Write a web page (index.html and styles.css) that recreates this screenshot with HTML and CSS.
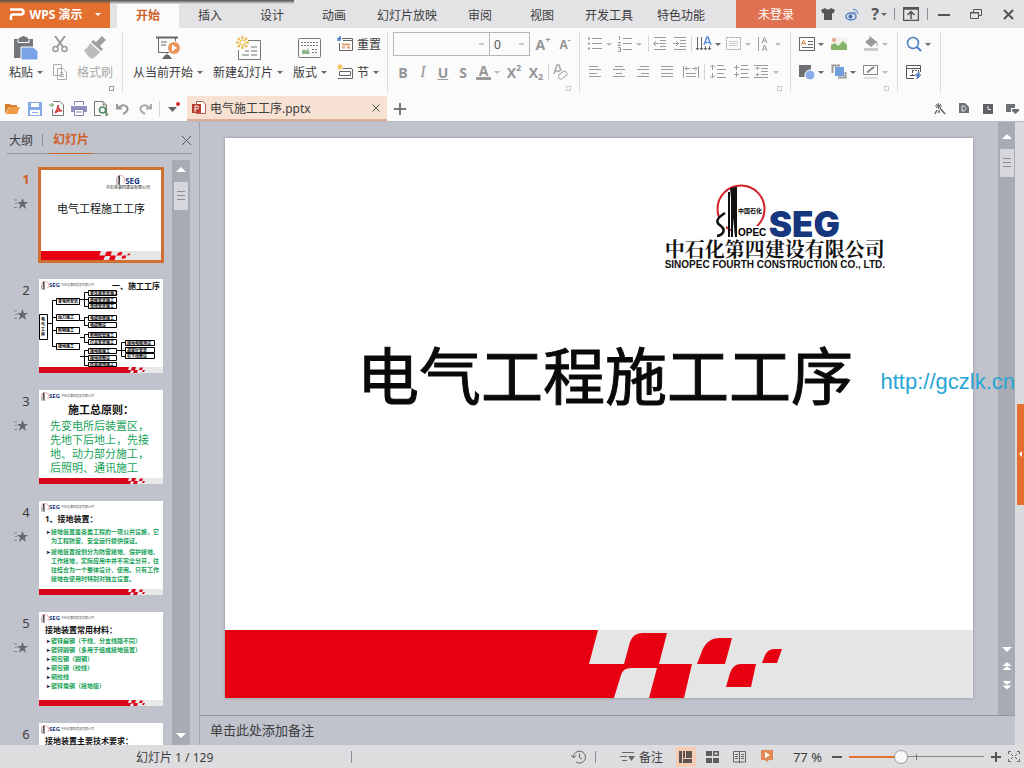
FILE: index.html
```html
<!DOCTYPE html>
<html lang="zh-CN">
<head>
    <meta charset="UTF-8">
    <meta name="viewport" content="width=device-width, initial-scale=1.0">
    <title>电气施工工序.pptx - WPS 演示</title>
    <link rel="stylesheet" href="styles.css">
</head>
<body>
    <svg class="sprite" aria-hidden="true">
        <symbol id="star" viewBox="0 0 14 12"><path d="M8.500 0l1.500 4H14l-3.200 2.500L12 11 8.500 8.300 5 11l1.200-4.500L3 4h4z" fill="#666870"/><path d="M0 2h3M1 5.500h2M0 9.500h3" stroke="#85878f"/></symbol>
        <symbol id="footer-wide" viewBox="0 0 748 68" preserveAspectRatio="none">
            <rect width="748" height="68" fill="#e5e5e5"/>
            <path d="M0 0H373L364 34H399L405 12Q408 3 418 3H442L434 34H467L459 68H424L432 38H406Q398 38 396 45L389 68H0ZM472 34L477 21Q482 8 495 8H507L500 34ZM501 57L505 43Q508 34 516 34H531L526 57ZM537 33L540 25Q543 19 549 19H557L552 33Z" fill="#e60012"/>
        </symbol>
        <symbol id="footer-small" viewBox="0 0 124 6" preserveAspectRatio="none">
            <rect width="124" height="6" fill="#e8e8e8"/>
            <path d="M0 0H90L89 3H92L93 0H97L96 3H99L98 6H94L95 3.500H92L91 6H0ZM100 3L101 .500H104L103 3ZM103 5L104 3H106L105 5Z" fill="#d7061c"/>
        </symbol>
        <symbol id="rig" viewBox="0 0 50 54">
            <circle cx="25" cy="25" r="23.500" fill="none" stroke="#d3222a" stroke-width="2"/>
            <path d="M0 34H10V54H0ZM16 42H50V54H16Z" fill="#fff"/>
            <path d="M13 8V53M16 5V53M20 3V53" stroke="#111" stroke-width="2"/>
            <path d="M14 4L19 53H21L20 3Z" fill="#111"/>
            <path d="M9 29C-1 35 0 39 5 42C10 46 7 51 1 52" fill="none" stroke="#111" stroke-width="2.500"/>
        </symbol>
    </svg>

    <div class="app">
        <header class="titlebar">
            <button class="brand"><svg width="16" height="12" viewBox="0 0 16 12"><path d="M1 1.500H12Q14.500 1.500 14.500 4Q14.500 6.500 12 6.500H4Q2 6.500 2 9V12" fill="none" stroke="#fff" stroke-width="2.500"/></svg><span>WPS 演示</span><i class="caret"></i></button>
            <nav class="tabs">
                <a href="#" class="active">开始</a>
                <a href="#">插入</a>
                <a href="#">设计</a>
                <a href="#">动画</a>
                <a href="#">幻灯片放映</a>
                <a href="#">审阅</a>
                <a href="#">视图</a>
                <a href="#">开发工具</a>
                <a href="#">特色功能</a>
            </nav>
            <button class="login">未登录</button>
            <div class="window-tools">
                <button aria-label="皮肤"><svg width="14" height="12" viewBox="0 0 14 12"><path d="M4 0Q7 3 10 0L14 2L12.500 5.500L11 5V12H3V5L1.500 5.500L0 2Z" fill="#555"/></svg></button>
                <button aria-label="微博"><svg width="14" height="13" viewBox="0 0 14 13" fill="none" stroke="#5480c4"><ellipse cx="6" cy="8.500" rx="5" ry="3.500" stroke-width="1.500"/><circle cx="5.500" cy="8.500" r="1.700" fill="#41659c"/><path d="M8 1.500Q12.500 .500 12.500 6M8.500 4Q10 3.500 10.500 5.500"/></svg></button>
                <button class="help" aria-label="帮助">?<i class="caret"></i></button>
                <i class="bar"></i>
                <button class="wide" aria-label="隐藏功能区"><svg width="16" height="14" viewBox="0 0 16 14" fill="none" stroke="#555"><path d="M.500 .500H15.500V13.500H.500ZM0 2H16M8 12V5M4.500 8L8 4.500L11.500 8" stroke-width="1.500"/></svg></button>
                <i class="bar"></i>
                <button class="wide" aria-label="最小化"><svg width="12" height="12" viewBox="0 0 12 12"><path d="M0 7H12" stroke="#555" stroke-width="2"/></svg></button>
                <button class="wide" aria-label="还原"><svg width="12" height="10" viewBox="0 0 12 10" fill="none" stroke="#555"><path d="M.500 3.500H8.500V9.500H.500ZM3.500 3V.500H11.500V6.500H9M0 4H9"/></svg></button>
                <button class="wide" aria-label="关闭"><svg width="11" height="11" viewBox="0 0 11 11"><path d="M1 1L10 10M10 1L1 10" stroke="#555" stroke-width="2"/></svg></button>
            </div>
        </header>

        <section class="ribbon">
            <!-- clipboard -->
            <div class="group clipboard">
                <button class="big paste">
                    <svg width="26" height="24" viewBox="0 0 26 24"><path d="M1 3H6V1.500H8Q8 0 10.500 0T13 1.500H15V3H20V22H1Z" fill="#747679"/><path d="M5 3.500V6.500H16V3.500" stroke="#fff" fill="none"/><path d="M8 11H20L25 15V24H8Z" fill="#7ba3e8" stroke="#fff"/></svg>
                    <span>粘贴<i class="caret"></i></span>
                </button>
                <div class="stack">
                    <button aria-label="剪切"><svg width="16" height="17" viewBox="0 0 16 17" fill="none" stroke="#999"><path d="M3 0L11 11M13 0L5 11" stroke-width="2"/><circle cx="3.500" cy="13" r="2.500" stroke-width="1.500"/><circle cx="12.500" cy="13" r="2.500" stroke-width="1.500"/></svg></button>
                    <button aria-label="复制"><svg width="14" height="16" viewBox="0 0 14 16" fill="#fbfbfb" stroke="#aaa"><path d="M.500 .500H8.500V11.500H.500ZM4.500 4.500H10L13.500 8V15.500H4.500ZM7 8.500H10M7 10.500H11M7 12.500H11"/></svg></button>
                </div>
                <button class="big off">
                    <svg width="24" height="24" viewBox="0 0 24 24" fill="#a0a0a0"><path d="M19 0L23 4L17 10L20 13L18 15L8 6L10 4L13 6Z"/><path d="M7 7L17 16Q13 21 9 23Q4 20 1 14Q5 12 7 7Z" fill="#bcbcbc"/></svg>
                    <span>格式刷</span>
                </button>
                <button class="launcher" aria-label="剪贴板"></button>
            </div>

            <!-- slides -->
            <div class="group slides">
                <button class="big">
                    <svg width="26" height="24" viewBox="0 0 26 24" fill="none" stroke="#666"><path d="M1 1.500H23" stroke-width="2"/><path d="M3.500 2V16.500H20.500V2M6 6H12M6 9H11M12 16V20"/><path d="M7 23L10 19H14L17 23Z" fill="#666" stroke="none"/><circle cx="19" cy="12" r="6.500" fill="#e8965c" stroke="#fff"/><path d="M17 8.500L22 12L17 15.500Z" fill="#fff" stroke="none"/></svg>
                    <span>从当前开始<i class="caret"></i></span>
                </button>
                <button class="big">
                    <svg width="26" height="24" viewBox="0 0 26 24" fill="none" stroke="#777"><path d="M13 4.500H25.500V23.500H3.500V14M7 19H14M16 19H22M10 15H14M16 15H22M16 11H22" /><path d="M7.500 0V3M7.500 10V13M1 6.500H4M11 6.500H14M3 2L5 4M12 2L10 4M3 11L5 9M12 11L10 9" stroke="#edb83e" stroke-width="2"/><circle cx="7.500" cy="6.500" r="2.500" fill="#fff" stroke="#edb83e"/></svg>
                    <span>新建幻灯片<i class="caret"></i></span>
                </button>
                <button class="big">
                    <svg width="24" height="24" viewBox="0 0 24 24" fill="none" stroke="#777"><rect x=".500" y="2.500" width="22" height="19" rx="1"/><path d="M3 6.500H20M3 9.500H20M14 13.500H20M14 16.500H20" stroke-dasharray="2 1"/><path d="M4 18V15L6 13L8 15L10 12L12 18Z" fill="#8cb48e" stroke="none"/></svg>
                    <span>版式<i class="caret"></i></span>
                </button>
                <div class="stack labelled">
                    <button><svg width="16" height="16" viewBox="0 0 16 16" fill="none" stroke="#666"><path d="M5 2.500H15.500V14.500H2.500V7M6 4.500H15"/><path d="M5 8.500H13M5 11.500H8M10 11.500H13" stroke="#e5a06d" stroke-width="2"/><path d="M1 5V2.500H4M3 0V5" stroke="#4d79d0" stroke-width="1.500"/></svg>重置</button>
                    <button><svg width="16" height="16" viewBox="0 0 16 16" fill="none" stroke="#666"><path d="M6 4.500H15M2.500 7.500H13.500V11.500H2.500ZM15.500 5V14.500H1"/><path d="M3 0V6M0 3H6M1 1L5 5M5 1L1 5" stroke="#edb83e"/></svg>节<i class="caret"></i></button>
                </div>
            </div>

            <!-- font -->
            <div class="group font">
                <div class="row">
                    <select class="font-name" aria-label="字体"><option></option></select>
                    <select class="font-size" aria-label="字号"><option>0</option></select>
                    <button class="glyph grow" aria-label="增大字号">A<sup>+</sup></button>
                    <button class="glyph shrink" aria-label="减小字号">A<sup>-</sup></button>
                </div>
                <div class="row">
                    <button class="glyph"><b>B</b></button>
                    <button class="glyph"><em>I</em></button>
                    <button class="glyph"><u>U</u></button>
                    <button class="glyph"><b>S</b></button>
                    <button class="glyph drop"><span class="font-color">A</span><i class="caret off"></i></button>
                    <button class="glyph script">X<sup>2</sup></button>
                    <button class="glyph script">X<sub>2</sub></button>
                    <i class="sep"></i>
                    <button class="glyph" aria-label="清除格式"><svg width="15" height="16" viewBox="0 0 15 16" fill="none" stroke="#aaa"><path d="M1 10L4 1H6L8 7M2.500 7H7" stroke-width="1.500"/><rect x="5" y="9" width="9" height="5" rx="2" transform="rotate(-40 9 11)"/></svg></button>
                </div>
                <button class="launcher off" aria-label="字体设置"></button>
            </div>

            <!-- paragraph -->
            <div class="group paragraph">
                <div class="row first">
                    <button class="drop" aria-label="项目符号"><svg class="line" width="16" height="16" viewBox="0 0 16 16"><path d="M5 2.500H15M5 7.500H15M5 12.500H15"/><path d="M1 2.500H3M1 7.500H3M1 12.500H3" stroke-width="2"/></svg><i class="caret off"></i></button>
                    <button class="drop" aria-label="编号"><svg class="line" width="16" height="16" viewBox="0 0 16 16"><path d="M6 2.500H15M6 7.500H15M6 13.500H15M2.500 0V4M1 6.500H3.500L1 9.500H4M1 11.500H3.500V15.500H1M2 13.500H3"/></svg><i class="caret off"></i></button>
                    <i class="sep"></i>
                    <button class="tool" aria-label="减少缩进"><svg class="line" width="16" height="16" viewBox="0 0 16 16"><path d="M2 1.500H14M8 4.500H14M8 7.500H14M8 10.500H14M2 13.500H14M1 7.500H7M4 5L1.500 7.500L4 10"/></svg></button>
                    <button class="tool" aria-label="增加缩进"><svg class="line" width="16" height="16" viewBox="0 0 16 16"><path d="M2 1.500H14M8 4.500H14M8 7.500H14M8 10.500H14M2 13.500H14M1 7.500H6M4 5L6.500 7.500L4 10"/></svg></button>
                    <i class="sep last"></i>
                    <button class="drop" aria-label="文字方向"><svg class="line dark" width="16" height="16" viewBox="0 0 16 16"><path d="M1.500 1V14M5.500 1V14M9.500 10V14M13.500 10V14M0 12L1.500 14L3 12M4 12L5.500 14L7 12M8 12L9.500 14L11 12M12 12L13.500 14L15 12"/><path d="M8 9L11 1H12L15 9M9 6.500H14" stroke="#5e8fd8" stroke-width="1.500"/></svg><i class="caret"></i></button>
                    <button class="drop" aria-label="对齐文本"><svg class="line" width="16" height="16" viewBox="0 0 16 16"><rect x=".500" y="1.500" width="14" height="12" stroke-dasharray="2 1"/><path d="M3 5.500H12M3 7.500H12M3 9.500H12" stroke="#ccc"/></svg><i class="caret off"></i></button>
                    <button class="drop" aria-label="字符方向"><svg class="line" width="16" height="16" viewBox="0 0 16 16"><path d="M2.500 1V15M6 7L8.500 1L11 7M7 5H10M6 15L8.500 9L11 15M7 13H10"/></svg><i class="caret off"></i></button>
                </div>
                <div class="row second">
                    <button class="align" aria-label="左对齐"><svg class="line" width="14" height="14" viewBox="0 0 14 14"><path d="M1 1.500H10M1 4.500H13M1 8.500H9M1 11.500H13"/></svg></button>
                    <button class="align" aria-label="居中"><svg class="line" width="14" height="14" viewBox="0 0 14 14"><path d="M3 1.500H11M1 4.500H13M4 8.500H10M1 11.500H13"/></svg></button>
                    <button class="align" aria-label="右对齐"><svg class="line" width="14" height="14" viewBox="0 0 14 14"><path d="M4 1.500H13M1 4.500H13M5 8.500H13M1 11.500H13"/></svg></button>
                    <button class="align" aria-label="两端对齐"><svg class="line" width="14" height="14" viewBox="0 0 14 14"><path d="M1 1.500H13M1 4.500H13M1 8.500H13M1 11.500H13"/></svg></button>
                    <button class="align" aria-label="分散对齐"><svg class="line" width="16" height="14" viewBox="0 0 16 14"><path d="M.500 1V13M15.500 1V13M2 3.500H7M9 3.500H14M4 1.500L2 3.500L4 5.500M12 1.500L14 3.500L12 5.500M3 8.500H13M3 11.500H13"/></svg></button>
                    <i class="sep"></i>
                    <button class="align" aria-label="行距"><svg class="line" width="16" height="16" viewBox="0 0 16 16"><path d="M7 1.500H14M7 5.500H16M7 9.500H14M7 13.500H16M2.500 1V6M2.500 9V14M0 3.500L2.500 1L5 3.500M0 11.500L2.500 14L5 11.500"/></svg></button>
                    <button class="align" aria-label="段前间距"><svg class="line" width="16" height="16" viewBox="0 0 16 16"><path d="M7 1.500H14M6 5.500H15M7 9.500H14M6 13.500H15M0 3.500H5M2.500 1V6M0 10.500H5M2.500 8V13"/></svg></button>
                    <button class="drop" aria-label="段后间距"><svg class="line" width="16" height="16" viewBox="0 0 16 16"><path d="M0 1.500H14M7 4.500H14M7 7.500H14M7 10.500H14M0 13.500H14M3.500 3V6M1.500 5L3.500 3L5.500 5M3.500 9V12M1.500 10L3.500 12L5.500 10"/></svg><i class="caret off"></i></button>
                </div>
                <button class="launcher off" aria-label="段落设置"></button>
            </div>

            <!-- drawing -->
            <div class="group drawing">
                <div class="row">
                    <button class="drop" aria-label="文本框"><svg width="16" height="14" viewBox="0 0 16 14" fill="none" stroke="#666"><rect x=".500" y=".500" width="15" height="13"/><path d="M9 4.500H14M9 7.500H14M3 10.500H14"/><path d="M2.500 8L4.500 3L7 8M3 6.500H6" stroke="#d98a4c"/></svg><i class="caret"></i></button>
                    <button class="drop" aria-label="图片"><svg width="16" height="14" viewBox="0 0 16 14"><path d="M0 0H16V13H0Z" fill="#f3f3ee"/><path d="M0 13V8L4 6L7 9L12 4L16 8V13Z" fill="#85b368"/><circle cx="3" cy="3" r="2" fill="#e8a08c"/></svg></button>
                    <button class="drop" aria-label="填充"><svg width="16" height="16" viewBox="0 0 16 16"><path d="M2 6L8 1L14 6L8 11Z" fill="#999"/><path d="M7 0V4M13 5Q15 8 14 10" stroke="#999" fill="none"/><path d="M1 13.500H15" stroke="#ccc" stroke-width="3"/></svg><i class="caret off"></i></button>
                </div>
                <div class="row">
                    <button class="drop" aria-label="形状"><svg width="16" height="16" viewBox="0 0 16 16"><path d="M0 1H12V5L5 13H0Z" fill="#6c6e70"/><circle cx="11" cy="11" r="5" fill="#8cabec" stroke="#fff"/></svg><i class="caret"></i></button>
                    <button class="drop" aria-label="排列"><svg width="16" height="16" viewBox="0 0 16 16"><path d="M1.500 9V1.500H9M14.500 8V13.500H7" fill="none" stroke="#999" stroke-width="2"/><rect x="4" y="3" width="9" height="9" fill="#6f9ddf"/></svg><i class="caret"></i></button>
                    <button class="drop" aria-label="轮廓"><svg width="16" height="16" viewBox="0 0 16 16" fill="none" stroke="#888"><path d="M14.500 1V10.500H.500V1.500H15"/><path d="M4 8.500L11 3" stroke-width="2"/><path d="M1 14H15" stroke="#ddd" stroke-width="2"/></svg><i class="caret off"></i></button>
                </div>
                <button class="launcher off" aria-label="绘图设置"></button>
            </div>

            <!-- editing -->
            <div class="group editing">
                <div class="row">
                    <button class="drop" aria-label="查找"><svg width="16" height="16" viewBox="0 0 16 16" fill="none" stroke="#4a7fc0" stroke-width="1.500"><circle cx="7" cy="7" r="5.500"/><path d="M11 11L15 15" stroke-width="2"/></svg><i class="caret"></i></button>
                </div>
                <div class="row">
                    <button class="drop" aria-label="选择"><svg width="16" height="16" viewBox="0 0 16 16" fill="none" stroke="#555"><path d="M8 14.500H.500V1.500H14.500V8M0 4.500H15"/><path d="M6 6.500H13M6.500 7V12M12.500 7V10M4 11.500H9" stroke-dasharray="2 1"/><path d="M9 11H13V8M15 11L11 15V11Z" fill="#5d83c5" stroke="#5d83c5"/></svg></button>
                </div>
            </div>
        </section>

        <div class="docbar">
            <div class="quick">
                <button aria-label="打开"><svg width="16" height="12" viewBox="0 0 16 12"><path d="M0 11V1H5L6 2H12V4H4Z" fill="#d67f30"/><path d="M4 4H15L12 11H1Z" fill="#f29a48"/></svg></button>
                <button aria-label="保存"><svg width="14" height="14" viewBox="0 0 14 14"><path d="M0 0H14V14H0Z" fill="#86aae6"/><path d="M3 1H11V5H3ZM2 8H12V13H2Z" fill="#fff"/><path d="M4 10.500H10" stroke="#86aae6"/></svg></button>
                <button aria-label="输出PDF"><svg width="16" height="16" viewBox="0 0 16 16" fill="none" stroke="#777"><path d="M4.500 1V.500H11L14.500 4V14.500H3.500V8"/><path d="M6 12Q9 9 9 4Q9 9 13 10Q9 9 6 12" stroke="#d2403e" stroke-width="1.500"/><path d="M0 4H4M2.500 2L4.500 4L2.500 6" stroke="#4f9a5d"/></svg></button>
                <button aria-label="打印"><svg width="16" height="15" viewBox="0 0 16 15" fill="none" stroke="#8483b4"><path d="M3.500 4V.500H12.500V4"/><path d="M0 5H16V11H0Z" fill="#9291c0" stroke="none"/><path d="M3.500 8.500H12.500V14.500H3.500ZM5 11H11" fill="#fff"/></svg></button>
                <button aria-label="打印预览"><svg width="15" height="15" viewBox="0 0 15 15" fill="none" stroke="#777"><path d="M7 14.500H.500V.500H9L12.500 4V14.500H11M9 1V4H12"/><circle cx="8.500" cy="9" r="3" stroke="#528b60" stroke-width="1.500"/><path d="M11 11L14 14" stroke="#528b60" stroke-width="1.500"/></svg></button>
                <button aria-label="撤销"><svg width="14" height="12" viewBox="0 0 14 12" fill="none" stroke="#999"><path d="M1 1V5.500H6M2 5Q7 0 11 4Q13 8 7 11" stroke-width="2"/></svg></button>
                <button aria-label="恢复"><svg width="14" height="12" viewBox="0 0 14 12" fill="none" stroke="#aaa"><path d="M13 1V5.500H8M12 5Q7 0 3 4Q1 8 7 11" stroke-width="2"/></svg></button>
                <i class="sep"></i>
                <button class="more" aria-label="自定义快速访问工具栏"><svg width="12" height="14" viewBox="0 0 12 14"><path d="M0 5H9L4.500 10Z" fill="#666"/><circle cx="10" cy="2" r="2" fill="#d7282c"/></svg></button>
            </div>
            <div class="doc-tab">
                <svg width="14" height="14" viewBox="0 0 14 14"><path d="M4.500 .500H10.500L13.500 3V12.500H4.500Z" fill="#fff" stroke="#b15c53"/><rect y="3" width="9" height="9" fill="#b93c31"/><path d="M3 11V5H5Q6.500 5 6.500 6.500T5 8H3" fill="none" stroke="#fff"/></svg>
                <span>电气施工工序.pptx</span>
                <button aria-label="关闭文档"><svg width="8" height="8" viewBox="0 0 8 8"><path d="M.500 .500L7.500 7.500M7.500 .500L.500 7.500" stroke="#555"/></svg></button>
            </div>
            <button class="new-tab" aria-label="新建"><svg width="12" height="12" viewBox="0 0 12 12"><path d="M0 6H12M6 0V12" stroke="#777" stroke-width="2"/></svg></button>
            <div class="doc-tools">
                <button aria-label="特色"><svg width="12" height="12" viewBox="0 0 12 12" fill="none" stroke="#666"><path d="M1 3H8M4.500 0V6M2 1L7 5M7 1L2 5" /><path d="M3 7L1 11M6 5L11 11M5 7V10" stroke-width="1.500"/></svg></button>
                <button aria-label="文档"><svg width="10" height="11" viewBox="0 0 10 11"><path d="M0 0H6L10 4V10H0Z" fill="#6e7078"/><path d="M3 3V8H5Q7 7 7 5.500T5 3Z" fill="none" stroke="#eee"/></svg></button>
                <button aria-label="历史"><svg width="10" height="10" viewBox="0 0 10 10"><rect width="10" height="10" fill="#5f6167"/><path d="M5 2V5.500H8" stroke="#eee" fill="none"/></svg></button>
                <button aria-label="窗口"><svg width="13" height="10" viewBox="0 0 13 10"><path d="M0 0H9V4H5V8H0Z" fill="#6e7078"/><path d="M6 5H13V7L9.500 10L6 7Z" fill="#6e7078"/></svg></button>
            </div>
        </div>

        <main class="main">
            <aside class="sidebar">
                <div class="pane-tabs">
                    <a href="#">大纲</a>
                    <i class="bar"></i>
                    <a href="#" class="active">幻灯片</a>
                    <button aria-label="关闭窗格"><svg width="11" height="11" viewBox="0 0 11 11"><path d="M1 1L10 10M10 1L1 10" stroke="#555"/></svg></button>
                </div>
                <div class="pane-body">
                    <ol class="thumbs">
                        <li class="active">
                            <div class="mark"><span>1</span><svg width="14" height="12"><use href="#star"/></svg></div>
                            <div class="thumb cover">
                                <div class="mini-logo"><div><svg width="9" height="10"><use href="#rig"/></svg><b>SEG</b></div><small>中石化第四建设有限公司</small></div>
                                <h3>电气工程施工工序</h3>
                                <svg class="strip"><use href="#footer-wide"/></svg>
                            </div>
                        </li>
                        <li>
                            <div class="mark"><span>2</span><svg width="14" height="12"><use href="#star"/></svg></div>
                            <div class="thumb">
                                <svg class="tree" viewBox="0 0 124 88">
                                    <g fill="none" stroke="#000">
                                        <path d="M.500 35.500H8.500V60.500H.500ZM17.500 19.500H40.500V25.500H17.500ZM17.500 35.500H40.500V41.500H17.500ZM17.500 48.500H40.500V54.500H17.500ZM17.500 64.500H40.500V70.500H17.500Z"/>
                                        <path d="M49.500 11.500H77.500V16.500H49.500ZM49.500 18.500H77.500V23.500H49.500ZM49.500 24.500H77.500V29.500H49.500ZM49.500 36.500H77.500V41.500H49.500ZM49.500 43.500H77.500V48.500H49.500ZM49.500 53.500H77.500V58.500H49.500ZM49.500 60.500H77.500V65.500H49.500ZM49.500 69.500H77.500V74.500H49.500ZM49.500 76.500H77.500V81.500H49.500ZM49.500 83.500H77.500V87.500H49.500Z"/>
                                        <path d="M86.500 61.500H115.500V66.500H86.500ZM86.500 68.500H115.500V73.500H86.500ZM86.500 74.500H115.500V79.500H86.500Z"/>
                                        <path d="M9 44.500H13.500M17 21.500H13.500V67.500H17M13 38.500H17M13 51.500H17M41 20.500H49M49 13.500H45.500V27.500H49M41 41.500H45.500M49 38.500H45.500V46.500H49M41 58.500H45.500M49 55.500H45.500V63.500H49M41 77.500H49M49 71.500H45.500V86.500H49M78 71.500H86M86 63.500H82.500V77.500H86"/>
                                    </g>
                                    <g class="tree-text">
                                        <text x="19" y="24">变电所安装</text><text x="19" y="40">动力施工</text><text x="19" y="53">照明施工</text><text x="19" y="69">接地施工</text>
                                        <text x="51" y="16">变压器安装施工</text><text x="51" y="23">盘柜安装施工</text><text x="51" y="29">母线安装施工</text>
                                        <text x="51" y="41">电缆桥架施工</text><text x="51" y="48">电缆敷设</text><text x="51" y="58">照明配管施工</text><text x="51" y="65">灯具安装施工</text>
                                        <text x="51" y="74">接地极施工</text><text x="51" y="81">接地线敷设</text><text x="51" y="87">防雷接地施工</text>
                                        <text x="88" y="66">接地电阻测试</text><text x="88" y="73">避雷针安装</text><text x="88" y="79">引下线敷设</text>
                                        <text x="2" y="42">电</text><text x="2" y="47">气</text><text x="2" y="52">工</text><text x="2" y="57">序</text>
                                    </g>
                                </svg>
                                <div class="mini-head"><svg width="8" height="9"><use href="#rig"/></svg><b>SEG</b><small>中石化第四建设有限公司</small><strong>一、施工工序</strong></div>
                                <svg class="strip"><use href="#footer-small"/></svg>
                            </div>
                        </li>
                        <li>
                            <div class="mark"><span>3</span><svg width="14" height="12"><use href="#star"/></svg></div>
                            <div class="thumb">
                                <div class="mini-head"><svg width="8" height="9"><use href="#rig"/></svg><b>SEG</b><small>中石化第四建设有限公司</small></div>
                                <h3>施工总原则：</h3>
                                <p class="rule">先变电所后装置区，<br>先地下后地上，先接<br>地、动力部分施工，<br>后照明、通讯施工</p>
                                <svg class="strip"><use href="#footer-small"/></svg>
                            </div>
                        </li>
                        <li>
                            <div class="mark"><span>4</span><svg width="14" height="12"><use href="#star"/></svg></div>
                            <div class="thumb">
                                <div class="mini-head"><svg width="8" height="9"><use href="#rig"/></svg><b>SEG</b><small>中石化第四建设有限公司</small></div>
                                <h4>1、接地装置：</h4>
                                <ul class="points loose">
                                    <li>接地装置是各类工程的一项公共设施，它<br>为工程防雷、安全运行提供保证。</li>
                                    <li>接地装置按划分为防雷接地、保护接地、<br>工作接地，实际应用中并不完全分开，往<br>往结合为一个整体设计、使用。只有工作<br>接地在使用时特别对独立设置。</li>
                                </ul>
                                <svg class="strip"><use href="#footer-small"/></svg>
                            </div>
                        </li>
                        <li>
                            <div class="mark"><span>5</span><svg width="14" height="12"><use href="#star"/></svg></div>
                            <div class="thumb">
                                <div class="mini-head"><svg width="8" height="9"><use href="#rig"/></svg><b>SEG</b><small>中石化第四建设有限公司</small></div>
                                <h4>接地装置常用材料：</h4>
                                <ul class="points">
                                    <li>镀锌扁钢（干线、分支线路不同）</li>
                                    <li>镀锌圆钢（多用于组成接地装置）</li>
                                    <li>铜包钢（圆钢）</li>
                                    <li>铜包钢（绞线）</li>
                                    <li>铜绞线</li>
                                    <li>镀锌角钢（接地极）</li>
                                </ul>
                                <svg class="strip"><use href="#footer-small"/></svg>
                            </div>
                        </li>
                        <li>
                            <div class="mark"><span>6</span></div>
                            <div class="thumb">
                                <div class="mini-head"><svg width="8" height="9"><use href="#rig"/></svg><b>SEG</b><small>中石化第四建设有限公司</small></div>
                                <h4>接地装置主要技术要求：</h4>
                                <svg class="strip"><use href="#footer-small"/></svg>
                            </div>
                        </li>
                    </ol>
                    <div class="scrollbar">
                        <i class="up"></i>
                        <span class="handle"></span>
                        <i class="down"></i>
                    </div>
                </div>
            </aside>

            <section class="editor">
                <div class="canvas">
                    <div class="stage">
                        <article class="slide">
                            <div class="logo">
                                <div class="logo-top">
                                    <svg width="50" height="54" viewBox="0 0 50 54"><use href="#rig"/><text class="seal" x="22" y="29">中国石化</text><text class="opec" x="22" y="52">OPEC</text></svg>
                                    <b>SEG</b>
                                </div>
                                <div class="logo-cn">中石化第四建设有限公司</div>
                                <div class="logo-en">SINOPEC FOURTH CONSTRUCTION CO., LTD.</div>
                            </div>
                            <h1>电气工程施工工序</h1>
                            <svg class="slide-footer"><use href="#footer-wide"/></svg>
                        </article>
                    </div>
                    <div class="scrollbar tall">
                        <i class="up"></i>
                        <span class="handle"></span>
                        <i class="down"></i>
                        <svg width="10" height="9" viewBox="0 0 10 9"><path d="M5 0L9.500 4H.500ZM5 4L9.500 8H.500Z" fill="#fff"/></svg>
                        <svg width="10" height="9" viewBox="0 0 10 9"><path d="M5 4L.500 0H9.500ZM5 8.500L.500 4.500H9.500Z" fill="#fff"/></svg>
                    </div>
                </div>
                <div class="notes">单击此处添加备注</div>
                <a class="watermark" href="http://gczlk.cn">http://gczlk.cn</a>
            </section>
            <div class="side-rail"><button aria-label="展开任务窗格"></button></div>
        </main>

        <footer class="status">
            <span class="count">幻灯片 1 / 129</span>
            <i class="bar"></i>
            <div class="status-tools">
                <button aria-label="备份"><svg width="15" height="14" viewBox="0 0 15 14" fill="none" stroke="#666"><path d="M2.500 7A6 6 0 1 1 5 12M0 5L2.500 8L5 5.500M8.500 3.500V7.500L11 9" /></svg></button>
                <i class="bar"></i>
                <button class="note-btn"><svg width="15" height="12" viewBox="0 0 15 12" fill="none" stroke="#666"><path d="M2 1.500H14M0 5.500H7M2 9.500H7"/><path d="M8 5H15L11.500 10Z" fill="#666" stroke="none"/></svg>备注</button>
                <button class="view on" aria-label="普通视图"><svg width="13" height="12" viewBox="0 0 13 12" fill="#5c5450"><path d="M0 0H3V12H0ZM4 0H13V7H4ZM4 8H13V12H4Z"/><path d="M6.500 0V7" stroke="#f6cdb4"/></svg></button>
                <button class="view" aria-label="幻灯片浏览"><svg width="13" height="12" viewBox="0 0 13 12" fill="#5c5c5e"><path d="M0 0H6V5H0ZM7 0H13V5H7ZM0 7H6V12H0ZM7 7H13V12H7Z"/><path d="M8.500 1.500H11.500V3.500H8.500Z" fill="#ddd"/></svg></button>
                <button class="view" aria-label="阅读视图"><svg width="13" height="12" viewBox="0 0 13 12" fill="none" stroke="#666"><path d="M.500 .500H12.500V11H.500ZM6.500 0V12M2 3.500H5M2 5.500H5M2 7.500H5M8 3.500H11M8 5.500H11M8 7.500H11"/></svg></button>
                <button class="view" aria-label="放映"><svg width="12" height="13" viewBox="0 0 12 13"><path d="M0 0H12V10H8L6 12L4 10H0Z" fill="#e08a55"/><path d="M4 2L9 5L4 8Z" fill="#fff"/></svg></button>
                <label class="percent" for="zoom">77 %</label>
                <button aria-label="缩小"><svg width="10" height="10" viewBox="0 0 10 10"><path d="M0 5H10" stroke="#555" stroke-width="2"/></svg></button>
                <input type="range" id="zoom" min="0" max="100" value="37">
                <button aria-label="放大"><svg width="10" height="10" viewBox="0 0 10 10"><path d="M0 5H10M5 0V10" stroke="#555" stroke-width="2"/></svg></button>
                <button class="fit" aria-label="最佳显示比例"><svg width="12" height="11" viewBox="0 0 12 11" fill="none" stroke="#666"><path d="M.500 3V.500H3M9 .500H11.500V3M11.500 8V10.500H9M3 10.500H.500V8M3 3L5 5M9 3L7 5M3 8L5 6M9 8L7 6"/></svg></button>
            </div>
        </footer>
    </div>
</body>
</html>
```

FILE: styles.css
```css
* {
    box-sizing: border-box;
}
body {
    margin: 0;
    font-family: "Noto Sans", "Noto Sans CJK SC", sans-serif;
    font-size: 12px;
    color: #3c3c3e;
    background-color: #c0c3cc;
}
button {
    display: flex;
    align-items: center;
    justify-content: center;
    margin: 0;
    padding: 0;
    border: 0;
    background: none;
    font: inherit;
    color: inherit;
    white-space: nowrap;
    cursor: pointer;
}
a {
    color: inherit;
    text-decoration: none;
}
svg {
    display: block;
    flex: none;
}
.sprite {
    position: absolute;
    width: 0;
    height: 0;
}
.app {
    display: flex;
    flex-direction: column;
    height: 100vh;
    overflow: hidden;
}
.caret {
    flex: none;
    width: 6px;
    border: 3px solid transparent;
    border-top-color: #666;
    border-bottom: 0;
}
.caret.off {
    border-top-color: #bbb;
}
.bar {
    flex: none;
    width: 1px;
    height: 12px;
    background-color: #8d8f95;
}

/* title bar */
.titlebar {
    display: flex;
    flex: none;
    height: 28px;
    position: relative;
    background-color: #e3e3e5;
}
.titlebar::before {
    content: "";
    position: absolute;
    top: 0;
    left: 0;
    width: 294px;
    height: 4px;
    background: linear-gradient(#55504e, rgba(120, 116, 114, 0));
}
.brand {
    width: 110px;
    gap: 4px;
    background-color: #e4702f;
    color: #fff;
    font-weight: bold;
}
.brand svg {
    margin-right: 1px;
}
.brand .caret {
    margin-left: 9px;
    border-top-color: #fff;
}
.tabs {
    display: flex;
    flex: 1;
    align-items: flex-end;
    margin-left: 7px;
}
.tabs a {
    min-width: 62px;
    height: 24px;
    padding: 0 12px;
    line-height: 24px;
    text-align: center;
    white-space: nowrap;
}
.tabs .active {
    background-color: #fbfbfb;
    color: #d0602a;
    font-weight: bold;
}
.login {
    width: 80px;
    background-color: #e07152;
    color: #fff;
}
.window-tools {
    display: flex;
    align-items: center;
    width: 208px;
}
.window-tools button {
    width: 24px;
    height: 28px;
}
.window-tools .wide {
    flex: 1;
}
.window-tools .help {
    gap: 2px;
    width: 30px;
    font-size: 16px;
    font-weight: bold;
    color: #555;
}

/* ribbon */
.ribbon {
    display: flex;
    flex: none;
    height: 68px;
    padding: 4px 0;
    background-color: #fbfbfb;
}
.group {
    position: relative;
    flex: none;
    border-right: 1px solid #dcdce0;
}
.row {
    display: flex;
    align-items: center;
    height: 24px;
}
.row + .row {
    margin-top: 4px;
}
.big {
    flex-direction: column;
    padding-top: 4px;
}
.big span {
    display: flex;
    align-items: center;
    gap: 4px;
    height: 24px;
}
.big svg {
    height: 24px;
}
.big.off,
.launcher.off {
    color: #aaa;
}
.stack {
    display: flex;
    flex-direction: column;
    gap: 4px;
}
.stack button {
    height: 24px;
}
.labelled button {
    justify-content: flex-start;
    gap: 4px;
}
.launcher {
    position: absolute;
    right: 8px;
    bottom: 1px;
    width: 5px;
    height: 5px;
    border: 1px solid #999;
    border-width: 1px 0 0 1px;
}
.launcher::after {
    content: "";
    width: 3px;
    height: 3px;
    border: 1px solid #999;
    border-width: 0 1px 1px 0;
}
.launcher.off,
.launcher.off::after {
    border-color: #ccc;
}
.sep {
    flex: none;
    width: 1px;
    height: 16px;
    margin: 0 1px;
    background-color: #d6d6da;
}
.sep.last {
    margin-right: 4px;
}
.clipboard {
    display: flex;
    align-items: flex-start;
    gap: 9px;
    width: 123px;
    padding-left: 9px;
}
.slides {
    display: flex;
    align-items: flex-start;
    gap: 10px;
    width: 265px;
    padding-left: 10px;
}
.font {
    width: 192px;
    padding-left: 5px;
}
.font select {
    height: 24px;
    padding: 0 4px;
    border: 1px solid #b6b6ba;
    border-radius: 0;
    background: #fbfbfb linear-gradient(#ccc, #ccc) no-repeat right 5px center / 5px 2px;
    appearance: none;
    font: inherit;
    color: #555;
}
.font-name {
    width: 97px;
}
.font .font-size {
    width: 41px;
    margin-left: -1px;
}
.glyph {
    width: 20px;
    height: 24px;
    font-family: "Open Sans", sans-serif;
    font-size: 14px;
    color: #969698;
}
.glyph em {
    font-family: "Liberation Serif", serif;
    font-size: 16px;
}
.glyph u {
    font-weight: bold;
}
.glyph sup,
.glyph sub {
    font-size: 9px;
    line-height: 9px;
}
.grow,
.shrink {
    font-weight: bold;
}
.grow {
    width: 26px;
}
.shrink {
    width: 18px;
    font-size: 12px;
}
.glyph sup {
    align-self: flex-start;
    margin-top: 3px;
}
.script {
    width: 22px;
    font-weight: bold;
}
.script sub {
    align-self: flex-end;
    margin-bottom: 3px;
}
.font-color {
    width: 15px;
    border-bottom: 3px solid #999;
    font-weight: bold;
    line-height: 13px;
}
.drop {
    justify-content: flex-start;
    gap: 3px;
    width: 30px;
    height: 24px;
}
.glyph.drop {
    padding-left: 3px;
}
.tool {
    width: 20px;
}
.align {
    width: 24px;
}
.line {
    fill: none;
    stroke: #9c9c9e;
}
.line.dark {
    stroke: #666;
}
.paragraph {
    width: 211px;
}
.first {
    padding-left: 7px;
}
.second {
    padding-left: 3px;
}
.drawing {
    width: 107px;
    padding-left: 8px;
}
.drawing .row {
    gap: 2px;
}
.editing {
    width: 43px;
    padding-left: 8px;
}

/* document bar */
.docbar {
    display: flex;
    align-items: center;
    flex: none;
    height: 26px;
    border-bottom: 1px solid #b9bac2;
    background-color: #fbfbfb;
}
.quick {
    display: flex;
    align-items: center;
    gap: 4px;
    width: 187px;
    padding-left: 4px;
}
.quick button {
    width: 18px;
    height: 18px;
}
.doc-tab {
    display: flex;
    align-items: center;
    gap: 4px;
    width: 200px;
    height: 25px;
    padding: 0 6px 0 5px;
    border-bottom: 2px solid #dcae96;
    background-color: #f6e1d2;
}
.doc-tab button {
    margin-left: auto;
    width: 10px;
    height: 16px;
}
.new-tab {
    width: 26px;
    height: 24px;
}
.doc-tools {
    display: flex;
    margin-left: auto;
}
.doc-tools button {
    width: 24px;
    height: 20px;
}

/* work area */
.main {
    display: flex;
    flex: 1;
    min-height: 0;
}
.sidebar {
    display: flex;
    flex-direction: column;
    width: 200px;
    border-right: 1px solid #a1a3ac;
}
.pane-tabs {
    display: flex;
    align-items: center;
    flex: none;
    height: 32px;
    margin: 0 7px;
    padding: 5px 0 0 2px;
    border-bottom: 1px solid #92949e;
}
.pane-tabs .bar {
    margin: 0 6px 0 9px;
}
.pane-tabs .active {
    align-self: flex-end;
    margin-bottom: -1px;
    padding: 0 4px;
    line-height: 26px;
    border-bottom: 1px solid #d0602a;
    color: #d0602a;
    font-weight: bold;
}
.pane-tabs button {
    margin-left: auto;
    width: 11px;
    height: 20px;
}
.pane-body {
    display: flex;
    flex: 1;
    min-height: 0;
    padding: 6px 9px 0 0;
}
.thumbs {
    display: flex;
    flex-direction: column;
    flex: 1;
    gap: 17px;
    margin: 0;
    padding: 8px 0 0;
    overflow: hidden;
    list-style: none;
}
.thumbs > li {
    display: flex;
    flex: none;
    height: 94px;
}
.mark {
    width: 39px;
    padding-left: 14px;
    font-size: 13px;
}
.mark span {
    display: block;
    width: 24px;
    line-height: 22px;
    text-align: center;
}
.mark svg {
    margin-top: 8px;
}
.active .mark span {
    color: #d0602a;
    font-weight: bold;
}
.thumb {
    display: flex;
    flex-direction: column;
    width: 124px;
    position: relative;
    overflow: hidden;
    background-color: #fff;
    color: #111;
    white-space: nowrap;
}
.active .thumb {
    overflow: visible;
    outline: 3px solid #cf6f30;
    outline-offset: -2px;
}
.strip {
    width: 100%;
    height: 6px;
    margin-top: auto;
}
.cover {
    padding: 2px;
}
.cover .strip {
    height: 9px;
}
.mini-logo {
    align-self: flex-end;
    width: 46px;
    margin: 5px 10px 0 0;
    text-align: center;
}
.mini-logo div {
    display: flex;
    justify-content: center;
    align-items: flex-end;
}
.mini-logo b {
    font-size: 8px;
    line-height: 8px;
    color: #17367e;
}
.mini-logo small {
    display: block;
    font-size: 4px;
    line-height: 5px;
}
.thumb h3 {
    margin: 0;
    font-size: 11px;
    line-height: 16px;
    text-align: center;
}
.cover h3 {
    margin-top: 11px;
    font-weight: normal;
}
.mini-head {
    display: flex;
    align-items: center;
    height: 12px;
    padding-left: 2px;
    position: relative;
}
.mini-head b {
    font-size: 6px;
    color: #17367e;
}
.mini-head small {
    margin-left: 1px;
    font-size: 3px;
    color: #555;
}
.mini-head strong {
    margin-left: auto;
    font-size: 8px;
    padding-right: 3px;
}
.tree {
    position: absolute;
    top: 0;
    left: 0;
    width: 124px;
    height: 88px;
}
.tree-text {
    font-size: 4px;
    font-weight: bold;
}
.rule {
    margin: 0;
    padding: 1px 0 0 11px;
    font-size: 11px;
    line-height: 14px;
    color: #16a257;
}
.thumb h4 {
    margin: 0 0 1px 6px;
    font-size: 8px;
    line-height: 12px;
}
.points {
    margin: 0;
    padding: 0 0 0 12px;
    list-style: none;
    font-size: 6px;
    font-weight: bold;
    line-height: 9px;
    color: #16a257;
}
.points li::before {
    content: "➤";
    float: left;
    width: 5px;
    margin-left: -5px;
    font-size: 5px;
    color: #123;
}
.points.loose li {
    padding-top: 2px;
}
.scrollbar {
    display: flex;
    flex-direction: column;
    align-items: center;
    flex: none;
    width: 18px;
    padding: 7px 0;
    background-color: #a9abb4;
}
.scrollbar .up,
.scrollbar .down {
    border: 5px solid transparent;
}
.scrollbar .up {
    border-top: 0;
    border-bottom-color: #fff;
}
.scrollbar .down {
    margin-top: auto;
    border-bottom: 0;
    border-top-color: #fff;
}
.handle {
    width: 14px;
    height: 28px;
    margin-top: 10px;
    border: solid #d6d7dc;
    border-width: 9px 3px;
    background: repeating-linear-gradient(#8b8d95 0 1px, #d6d7dc 1px 4px);
}
.editor {
    display: flex;
    flex-direction: column;
    flex: 1;
    min-width: 0;
    position: relative;
}
.canvas {
    display: flex;
    flex: 1;
    min-height: 0;
}
.stage {
    display: flex;
    flex: 1;
    padding: 16px 25px 17px;
}
.slide {
    display: flex;
    flex-direction: column;
    flex: 1;
    background-color: #fff;
    box-shadow: 0 0 3px #8c8e97;
}
.logo {
    align-self: flex-end;
    margin: 46px 88px 0 0;
    color: #111;
    text-align: center;
}
.logo-top {
    display: flex;
    justify-content: center;
    align-items: flex-end;
    gap: 3px;
    padding-left: 6px;
}
.logo-top b {
    font-family: Inter, sans-serif;
    font-size: 35px;
    font-weight: 900;
    line-height: 28px;
    color: #16377d;
}
.seal {
    font-size: 6px;
    font-weight: bold;
}
.opec {
    font-family: "Liberation Sans", sans-serif;
    font-size: 10px;
    font-weight: bold;
}
.logo-cn {
    font-family: "Noto Serif CJK SC", "Noto Sans CJK SC", serif;
    font-size: 20px;
    font-weight: bold;
    line-height: 22px;
}
.logo-en {
    font-family: "Liberation Sans", sans-serif;
    font-size: 10px;
    font-weight: bold;
    line-height: 10px;
}
.slide h1 {
    margin: 60px 0 0;
    padding-left: 12px;
    font-size: 62px;
    font-weight: normal;
    line-height: 92px;
    text-align: center;
    color: #0a0a0a;
    -webkit-text-stroke: 1px #0a0a0a;
}
.slide-footer {
    width: 100%;
    height: 68px;
    margin-top: auto;
}
.tall {
    width: 17px;
    padding: 12px 0 25px;
}
.tall svg {
    margin-top: 10px;
}
.notes {
    flex: none;
    height: 30px;
    padding-left: 10px;
    border-top: 1px solid #92949e;
    font-size: 13px;
    line-height: 29px;
}
.watermark {
    position: absolute;
    top: 246px;
    right: 0;
    font-family: "Liberation Sans", sans-serif;
    font-size: 22px;
    line-height: 28px;
    color: #27a5d6;
}
.side-rail {
    display: flex;
    align-items: center;
    justify-content: flex-end;
    width: 9px;
    padding-top: 41px;
    background-color: #dadbdf;
}
.side-rail button {
    width: 7px;
    height: 101px;
    background-color: #e4702f;
}
.side-rail button::before {
    content: "";
    border: 3px solid transparent;
    border-left: 0;
    border-right-color: #fff;
}

/* status bar */
.status {
    display: flex;
    align-items: center;
    flex: none;
    height: 23px;
    background-color: #dddddf;
}
.count {
    width: 351px;
    padding-left: 136px;
}
.status-tools {
    display: flex;
    align-items: center;
    margin-left: auto;
    padding-right: 4px;
}
.status-tools .bar {
    margin: 0 24px 0 9px;
}
.note-btn {
    gap: 4px;
    margin-right: 13px;
}
.view {
    width: 20px;
    height: 20px;
    margin-right: 7px;
}
.view.on {
    background-color: #f6cdb4;
}
.percent {
    margin: 0 10px 0 9px;
    font-size: 13px;
}
#zoom {
    width: 135px;
    height: 14px;
    margin: 0 7px;
    appearance: none;
    background:
        linear-gradient(#e4702f, #e4702f) no-repeat left center / 50px 2px,
        linear-gradient(#777, #777) no-repeat center / 1px 6px,
        linear-gradient(#888, #888) no-repeat center / 100% 1px;
}
#zoom::-webkit-slider-thumb {
    appearance: none;
    width: 14px;
    height: 14px;
    border: 1px solid #999;
    border-radius: 50%;
    background-color: #f8f8f8;
}
.fit {
    margin-left: 7px;
}
```
